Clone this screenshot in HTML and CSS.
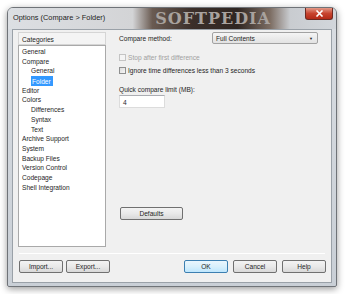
FILE: index.html
```html
<!DOCTYPE html>
<html lang="en">
<head>
    <meta charset="UTF-8">
    <title>Options (Compare &gt; Folder)</title>
    <link rel="stylesheet" href="styles.css">
</head>
<body>

    <div class="window">
        <div class="titlebar">
            <span class="title">Options (Compare &gt; Folder)</span>
            <span class="watermark">SOFTPEDIA</span>
            <span class="close-btn">
                <svg width="9" height="7" viewBox="0 0 9 7">
                    <path d="M1.5 0.5 L7.5 6.5 M7.5 0.5 L1.5 6.5" stroke="#fff" stroke-width="1.6"/>
                </svg>
            </span>
        </div>

        <div class="client">
            <div class="main">
                <div class="categories">
                    <div class="cat-header">Categories</div>
                    <ul class="cat-list">
                        <li>General</li>
                        <li>Compare</li>
                        <li class="sub">General</li>
                        <li class="sub"><span class="selected">Folder</span></li>
                        <li>Editor</li>
                        <li>Colors</li>
                        <li class="sub">Differences</li>
                        <li class="sub">Syntax</li>
                        <li class="sub">Text</li>
                        <li>Archive Support</li>
                        <li>System</li>
                        <li>Backup Files</li>
                        <li>Version Control</li>
                        <li>Codepage</li>
                        <li>Shell Integration</li>
                    </ul>
                </div>

                <div class="pane">
                    <div class="row method">
                        <span class="method-label">Compare method:</span>
                        <div class="select">
                            <span>Full Contents</span>
                            <span class="arrow">&#9660;</span>
                        </div>
                    </div>

                    <label class="check disabled"><span class="box"></span>Stop after first difference</label>
                    <label class="check"><span class="box"></span>Ignore time differences less than 3 seconds</label>

                    <div class="limit-label">Quick compare limit (MB):</div>
                    <div class="textbox">4</div>

                    <button class="btn defaults">Defaults</button>
                </div>
            </div>

            <div class="separator"></div>

            <div class="bottom">
                <div class="left-buttons">
                    <button class="btn">Import...</button>
                    <button class="btn">Export...</button>
                </div>
                <div class="right-buttons">
                    <button class="btn ok">OK</button>
                    <button class="btn">Cancel</button>
                    <button class="btn">Help</button>
                </div>
            </div>
        </div>
    </div>

</body>
</html>
```

FILE: styles.css
```css
* {
    margin: 0;
    padding: 0;
    box-sizing: border-box;
    font-family: 'Liberation Sans', Arial, sans-serif;
}

body {
    background: #fff;
    padding: 7px;
    font-size: 6.6px;
    color: #1e1e1e;
}

/* Window frame */
.window {
    width: 330px;
    height: 280px;
    display: flex;
    flex-direction: column;
    background: linear-gradient(180deg, #d9dde2, #c9cfd6);
    border: 1px solid #6f7378;
    border-radius: 6px 6px 2px 2px;
    box-shadow: 0 2px 7px rgba(0, 0, 0, 0.4);
    padding: 0 4px 3px 4px;
}

.titlebar {
    height: 21px;
    display: flex;
    align-items: flex-start;
    margin: 0 -4px;
    padding-left: 5px;
    border-radius: 5px 5px 0 0;
    background: linear-gradient(90deg, #dcdfe3 0%, #d3d4d6 38%, #6a5b52 44%, #3b2f2a 56%, #2f2622 70%, #7d6e64 80%, #c9ccd0 86%, #d2d6db 100%);
}

.title {
    margin-top: 5px;
    font-size: 7.4px;
    color: #1c1c1c;
}

.watermark {
    margin: 1px 0 0 50px;
    font-family: 'DejaVu Serif', serif;
    font-weight: bold;
    font-size: 16px;
    letter-spacing: 1px;
    color: #a8a29e;
}

.close-btn {
    margin-left: auto;
    margin-right: 3px;
    width: 28px;
    height: 12px;
    display: flex;
    justify-content: center;
    align-items: center;
    border: 1px solid #6d2a22;
    border-top: none;
    border-radius: 0 0 3px 3px;
    background: linear-gradient(180deg, #e49a88, #c7442f 50%, #b42a17);
}

/* Client area */
.client {
    flex: 1;
    display: flex;
    flex-direction: column;
    background: #f0f0f0;
    border: 1px solid #9aa1a8;
    padding: 2px 5px 0 5px;
}

.main {
    display: flex;
    height: 215px;
}

.categories {
    width: 88px;
    display: flex;
    flex-direction: column;
}

.cat-header {
    height: 13px;
    padding: 3px 0 0 3px;
    border: 1px solid #d5d5d5;
    background: #f4f4f4;
}

.cat-list {
    flex: 1;
    list-style: none;
    background: #fff;
    border: 1px solid #a9a9a9;
    padding: 1px 0 0 3px;
}

.cat-list li {
    height: 9.7px;
    line-height: 9.7px;
}

.cat-list li.sub {
    padding-left: 9px;
}

.selected {
    display: inline-block;
    background: #3399ff;
    color: #fff;
    padding: 1px 2px 0 1px;
    line-height: 9px;
}

/* Right pane */
.pane {
    width: 199px;
    margin-left: 13px;
    display: flex;
    flex-direction: column;
    align-items: flex-start;
}

.method {
    display: flex;
    align-items: center;
    width: 100%;
    margin-bottom: 10px;
}

.method-label {
    width: 93px;
}

.select {
    flex: 1;
    height: 12px;
    display: flex;
    align-items: center;
    justify-content: space-between;
    padding: 0 4px 0 3px;
    border: 1px solid #a2a2a2;
    border-radius: 2px;
    background: linear-gradient(180deg, #f5f5f5, #e2e2e2);
}

.arrow {
    font-size: 4px;
    color: #222;
}

.check {
    display: flex;
    align-items: center;
    height: 7px;
    margin-bottom: 5.5px;
}

.check .box {
    width: 7px;
    height: 7px;
    margin-right: 2px;
    border: 1px solid #8e8f8f;
    background: linear-gradient(135deg, #dcdcdc, #f6f6f6);
}

.check.disabled {
    color: #a0a0a0;
}

.check.disabled .box {
    border-color: #c4c4c4;
    background: #f4f4f4;
}

.limit-label {
    margin-top: 7px;
}

.textbox {
    width: 46px;
    height: 13px;
    margin-top: 2px;
    padding: 3px 0 0 3px;
    background: #fff;
    border: 1px solid #dcdcdc;
    border-top-color: #abadb3;
}

.btn {
    height: 13px;
    width: 44px;
    font-size: 6.6px;
    color: #1e1e1e;
    border: 1px solid #707070;
    border-radius: 2px;
    background: linear-gradient(180deg, #f3f3f3, #e9e9e9 50%, #d8d8d8);
}

.defaults {
    width: 63px;
    margin-top: 99px;
    margin-left: 1px;
}

.separator {
    height: 1px;
    margin: 6px 1px 0 1px;
    background: #c9c9c9;
    border-bottom: 1px solid #fff;
}

.bottom {
    display: flex;
    justify-content: space-between;
    margin-top: 6px;
    padding: 0 0 0 1px;
}

.left-buttons,
.right-buttons {
    display: flex;
    gap: 3px;
}

.right-buttons {
    gap: 5px;
}

.btn.ok {
    border-color: #3c7fb1;
    background: linear-gradient(180deg, #eaf6fd, #d9f0fc 50%, #bee6fd);
}
```
